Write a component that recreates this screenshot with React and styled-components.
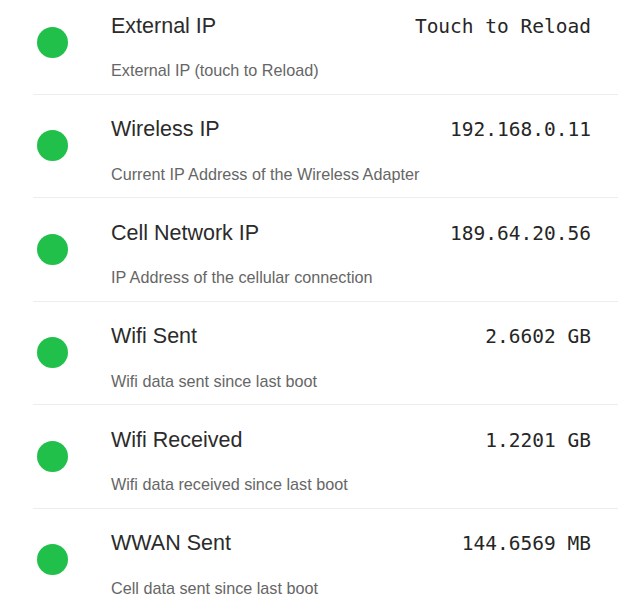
import React from "react";
import styled, { createGlobalStyle } from "styled-components";

const GlobalStyle = createGlobalStyle`
  body {
    margin: 0;
    background: #fff;
    font-family: "Liberation Sans", Arial, sans-serif;
  }
`;

const rows = [
  { title: "External IP", value: "Touch to Reload", desc: "External IP (touch to Reload)" },
  { title: "Wireless IP", value: "192.168.0.11", desc: "Current IP Address of the Wireless Adapter" },
  { title: "Cell Network IP", value: "189.64.20.56", desc: "IP Address of the cellular connection" },
  { title: "Wifi Sent", value: "2.6602 GB", desc: "Wifi data sent since last boot" },
  { title: "Wifi Received", value: "1.2201 GB", desc: "Wifi data received since last boot" },
  { title: "WWAN Sent", value: "144.6569 MB", desc: "Cell data sent since last boot" },
];

const App = () => {
  return (
    <>
      <GlobalStyle />
      <StList>
        {rows.map((row) => (
          <StRow key={row.title}>
            <StDot $color="#21c04b" />
            <StText>
              <StTop>
                <StTitle>{row.title}</StTitle>
                <StValue>{row.value}</StValue>
              </StTop>
              <StDesc>{row.desc}</StDesc>
            </StText>
          </StRow>
        ))}
      </StList>
    </>
  );
};

export default App;

const StList = styled.div`
  width: 585px;
  margin: -9px 0 0 33px;
`;

const StRow = styled.div`
  display: grid;
  grid-template-columns: 78px 1fr;
  align-items: center;
  height: 103.5px;
  box-sizing: border-box;
  padding-right: 27px;
  border-bottom: 1px solid #ededed;
`;

const StDot = styled.div`
  width: 31px;
  height: 31px;
  margin-left: 4px;
  border-radius: 50%;
  background: ${(p) => p.$color};
`;

const StText = styled.div`
  align-self: stretch;
  padding-top: 22px;
`;

const StTop = styled.div`
  display: flex;
  justify-content: space-between;
  align-items: center;
  height: 26px;
`;

const StTitle = styled.div`
  font-size: 21.5px;
  color: #2b2b2b;
`;

const StValue = styled.div`
  font-family: "DejaVu Sans Mono", "Liberation Mono", monospace;
  font-size: 19.5px;
  color: #262626;
`;

const StDesc = styled.div`
  margin-top: 21px;
  line-height: 20px;
  font-size: 16.2px;
  color: #666;
`;
